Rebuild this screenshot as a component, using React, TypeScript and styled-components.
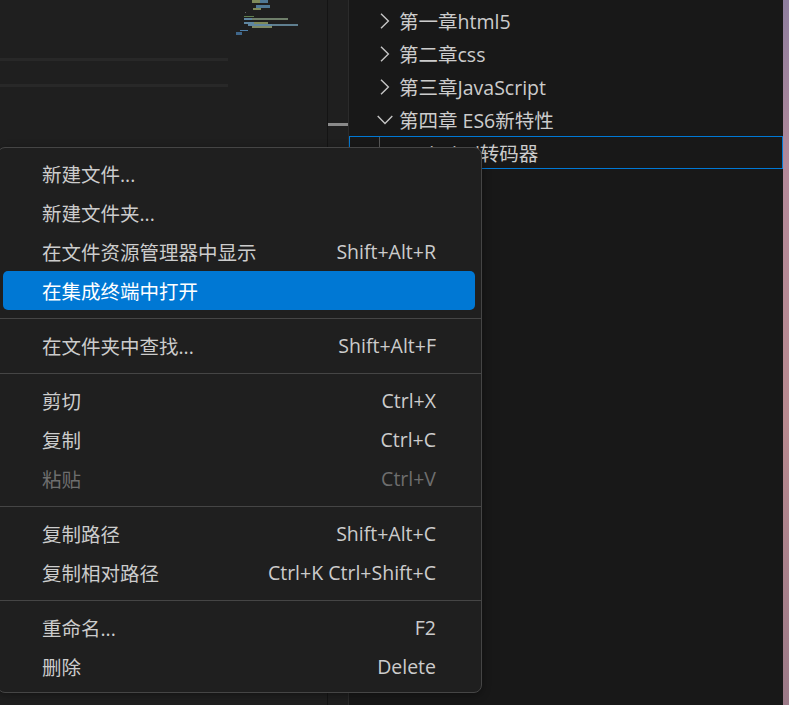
import styled, { createGlobalStyle } from "styled-components";

const GlobalStyle = createGlobalStyle`
  html, body {
    margin: 0;
    padding: 0;
    background: #181818;
    overflow: hidden;
  }
`;

const Screen = styled.div`
  position: relative;
  display: flex;
  width: 789px;
  height: 705px;
  overflow: hidden;
  font-family: "Open Sans", "Noto Sans CJK SC", sans-serif;
  font-size: 19.5px;
  color: #cccccc;
`;

const Editor = styled.div`
  width: 327px;
  padding-top: 58px;
  background: #1f1f1f;
  border-right: 1px solid #141414;
  position: relative;
`;

const HighlightLine = styled.div<{ $gap?: number }>`
  width: 228px;
  height: 3px;
  margin-top: ${(p) => p.$gap ?? 0}px;
  background: #282828;
`;

const Minimap = styled.svg`
  position: absolute;
  top: 0;
  left: 236px;
  filter: blur(0.35px);
`;

const Overview = styled.div`
  width: 20px;
  background: #1f1f1f;
  border-right: 1px solid #2b2b2b;
  padding-top: 123px;
`;

const ScrollThumb = styled.div`
  height: 3px;
  background: #8a8a8a;
`;

const Sidebar = styled.div`
  flex: 1;
  padding-top: 4px;
  background: #181818;
`;

const TreeRow = styled.div<{ $focused?: boolean }>`
  display: flex;
  align-items: center;
  height: 33px;
  box-sizing: border-box;
  padding-left: ${(p) => (p.$focused ? 63 : 22)}px;
  border: ${(p) => (p.$focused ? "1px solid #0078d4" : "none")};
  position: relative;
  white-space: nowrap;
`;

const Twisty = styled.span`
  display: flex;
  align-items: center;
  justify-content: center;
  width: 28px;
  color: #c5c5c5;
`;

const Chevron = styled.svg`
  fill: none;
  stroke: currentColor;
  stroke-width: 1.4;
`;

const IndentGuide = styled.span`
  position: absolute;
  left: 29px;
  top: 0;
  bottom: 0;
  width: 1px;
  background: #585858;
`;

const DesktopEdge = styled.div`
  width: 6px;
  background: linear-gradient(180deg, #8f7f9f 0%, #b58a9a 25%, #b98a90 60%, #9c7a88 100%);
`;

const Menu = styled.div`
  position: absolute;
  top: 147px;
  left: -3px;
  width: 485px;
  box-sizing: border-box;
  padding: 6px 6px 6px 5px;
  background: #1f1f1f;
  border: 1px solid #454545;
  border-radius: 8px;
  box-shadow: 0 2px 8px rgba(0, 0, 0, 0.36);
`;

const MenuItem = styled.div<{ $active?: boolean; $disabled?: boolean }>`
  display: flex;
  align-items: center;
  justify-content: space-between;
  height: 39px;
  padding: 0 39px;
  border-radius: 5px;
  white-space: nowrap;
  background: ${(p) => (p.$active ? "#0078d4" : "transparent")};
  color: ${(p) => (p.$active ? "#ffffff" : p.$disabled ? "#6e6e6e" : "#cccccc")};
`;

const Separator = styled.div`
  height: 1px;
  margin: 8px -6px 7px -5px;
  background: #454545;
`;

type Entry = { label: string; keys?: string; active?: boolean; disabled?: boolean };

const groups: Entry[][] = [
  [
    { label: "新建文件..." },
    { label: "新建文件夹..." },
    { label: "在文件资源管理器中显示", keys: "Shift+Alt+R" },
    { label: "在集成终端中打开", active: true },
  ],
  [{ label: "在文件夹中查找...", keys: "Shift+Alt+F" }],
  [
    { label: "剪切", keys: "Ctrl+X" },
    { label: "复制", keys: "Ctrl+C" },
    { label: "粘贴", keys: "Ctrl+V", disabled: true },
  ],
  [
    { label: "复制路径", keys: "Shift+Alt+C" },
    { label: "复制相对路径", keys: "Ctrl+K Ctrl+Shift+C" },
  ],
  [{ label: "重命名...", keys: "F2" }, { label: "删除", keys: "Delete" }],
];

const folders = ["第一章html5", "第二章css", "第三章JavaScript"];

// x, y, width, height, colour of the blocks in the editor minimap
const minimapBlocks: [number, number, number, number, string][] = [
  [16, 0, 8, 3, "#7f8a5a"],
  [24, 0, 8, 3, "#4f7896"],
  [20, 5, 14, 3, "#4f7896"],
  [17, 8, 8, 2, "#7f8a5a"],
  [9, 12, 1, 1, "#666666"],
  [8, 16, 10, 1, "#5f7f4f"],
  [8, 18, 8, 2, "#5f86a0"],
  [16, 18, 36, 2, "#6f7f6a"],
  [8, 22, 10, 2, "#5f86a0"],
  [18, 22, 14, 2, "#7f8a5a"],
  [12, 24, 24, 2, "#5f86a0"],
  [36, 24, 26, 2, "#5f7f90"],
  [16, 26, 20, 2, "#7f8a66"],
  [4, 30, 8, 1, "#4f7fa8"],
  [0, 32, 6, 3, "#3f668a"],
];

export default function App() {
  return (
    <Screen>
      <GlobalStyle />
      <Editor>
        <Minimap width="62" height="36" viewBox="0 0 62 36">
          {minimapBlocks.map(([x, y, w, h, fill]) => (
            <rect key={`${x}-${y}`} x={x} y={y} width={w} height={h} fill={fill} />
          ))}
        </Minimap>
        <HighlightLine />
        <HighlightLine $gap={23} />
      </Editor>
      <Overview>
        <ScrollThumb />
      </Overview>
      <Sidebar>
        {folders.map((name) => (
          <TreeRow key={name}>
            <Twisty>
              <Chevron width="10" height="16" viewBox="0 0 10 16">
                <path d="M1 .7 8.4 8 1 15.3" />
              </Chevron>
            </Twisty>
            {name}
          </TreeRow>
        ))}
        <TreeRow>
          <Twisty>
            <Chevron width="16" height="10" viewBox="0 0 16 10">
              <path d="M.7 1 8 8.4 15.3 1" />
            </Chevron>
          </Twisty>
          第四章 ES6新特性
        </TreeRow>
        <TreeRow $focused>
          <IndentGuide />
          2.babel转码器
        </TreeRow>
      </Sidebar>
      <DesktopEdge />
      <Menu>
        {groups.map((group, i) => (
          <div key={i}>
            {i > 0 && <Separator />}
            {group.map((item) => (
              <MenuItem key={item.label} $active={item.active} $disabled={item.disabled}>
                <span>{item.label}</span>
                {item.keys && <span>{item.keys}</span>}
              </MenuItem>
            ))}
          </div>
        ))}
      </Menu>
    </Screen>
  );
}
